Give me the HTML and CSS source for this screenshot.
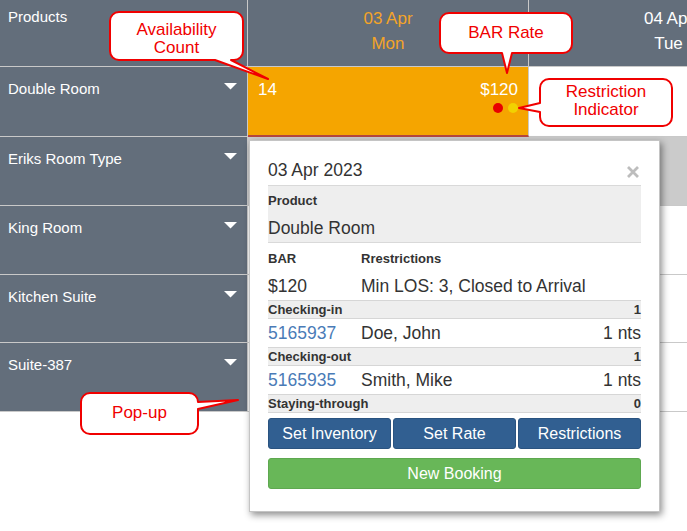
FILE: index.html
```html
<!DOCTYPE html>
<html>
<head>
<meta charset="utf-8">
<link rel="stylesheet" href="styles.css">
</head>
<body>
<div class="board">
  <div class="grid">
    <div class="cell side head">Products</div>
    <div class="cell date head today"><div>03 Apr</div><div>Mon</div></div>
    <div class="cell date head"><div>04 Apr</div><div>Tue</div></div>

    <div class="cell side"><span>Double Room</span><svg class="caret" viewBox="0 0 13 7"><polygon points="0,0 13,0 6.5,6.5"/></svg></div>
    <div class="cell avail">
      <div class="avail-top"><span>14</span><span>$120</span></div>
      <div class="dots"><i class="dot red"></i><i class="dot yellow"></i></div>
    </div>
    <div class="cell day last"></div>

    <div class="cell side"><span>Eriks Room Type</span><svg class="caret" viewBox="0 0 13 7"><polygon points="0,0 13,0 6.5,6.5"/></svg></div>
    <div class="cell day closed"></div>
    <div class="cell day closed last"></div>

    <div class="cell side"><span>King Room</span><svg class="caret" viewBox="0 0 13 7"><polygon points="0,0 13,0 6.5,6.5"/></svg></div>
    <div class="cell day"></div>
    <div class="cell day last"></div>

    <div class="cell side"><span>Kitchen Suite</span><svg class="caret" viewBox="0 0 13 7"><polygon points="0,0 13,0 6.5,6.5"/></svg></div>
    <div class="cell day"></div>
    <div class="cell day last"></div>

    <div class="cell side"><span>Suite-387</span><svg class="caret" viewBox="0 0 13 7"><polygon points="0,0 13,0 6.5,6.5"/></svg></div>
    <div class="cell day"></div>
    <div class="cell day last"></div>
  </div>

  <div class="popup">
    <div class="pop-title"><span>03 Apr 2023</span><svg class="close" viewBox="0 0 12 12"><path d="M1 1 L11 11 M11 1 L1 11"/></svg></div>
    <div class="pop-product">
      <div class="lbl">Product</div>
      <div class="val">Double Room</div>
    </div>
    <div class="pair labels"><span class="c1">BAR</span><span>Rrestrictions</span></div>
    <div class="pair values"><span class="c1">$120</span><span>Min LOS: 3, Closed to Arrival</span></div>
    <div class="bar"><span>Checking-in</span><span>1</span></div>
    <div class="booking"><a class="c1 link">5165937</a><span class="guest">Doe, John</span><span>1 nts</span></div>
    <div class="bar"><span>Checking-out</span><span>1</span></div>
    <div class="booking"><a class="c1 link">5165935</a><span class="guest">Smith, Mike</span><span>1 nts</span></div>
    <div class="bar"><span>Staying-through</span><span>0</span></div>
    <div class="btns">
      <button class="btn blue">Set Inventory</button>
      <button class="btn blue">Set Rate</button>
      <button class="btn blue">Restrictions</button>
    </div>
    <button class="btn green">New Booking</button>
  </div>

  <svg class="callouts" viewBox="0 0 687 531">
    <path d="M119 12 H234 A9 9 0 0 1 243 21 V51 A9 9 0 0 1 234 60 H231 L268 79 L215 60 H119 A9 9 0 0 1 110 51 V21 A9 9 0 0 1 119 12 Z"/>
    <path d="M449 13 H563 A9 9 0 0 1 572 22 V44 A9 9 0 0 1 563 53 H512 L507 73 L502 53 H449 A9 9 0 0 1 440 44 V22 A9 9 0 0 1 449 13 Z"/>
    <path d="M549 79 H663 A9 9 0 0 1 672 88 V117 A9 9 0 0 1 663 126 H549 A9 9 0 0 1 540 117 V112 L519 108 L540 103 V88 A9 9 0 0 1 549 79 Z"/>
    <path d="M90 393 H189 A9 9 0 0 1 198 402 L238 400 L198 409 V425 A9 9 0 0 1 189 434 H90 A9 9 0 0 1 81 425 V402 A9 9 0 0 1 90 393 Z"/>
  </svg>
  <div class="co-text co-avail">Availability<br>Count</div>
  <div class="co-text co-bar">BAR Rate</div>
  <div class="co-text co-restr">Restriction<br>Indicator</div>
  <div class="co-text co-pop">Pop-up</div>
</div>
</body>
</html>
```

FILE: styles.css
```css
html, body {
  margin: 0;
  padding: 0;
  background: #ffffff;
}

body {
  font-family: "Liberation Sans", Arial, sans-serif;
}

.board {
  position: relative;
  width: 687px;
  height: 531px;
  overflow: hidden;
  background: #ffffff;
}

.grid {
  display: grid;
  grid-template-columns: 248px 281px 280px;
  grid-template-rows: 67px 70px 69px 69px 68px 69px;
  width: 809px;
}

.cell {
  box-sizing: border-box;
  border-bottom: 1px solid #c9c9c9;
  border-right: 1px solid #c9c9c9;
}

.cell.last {
  border-right: none;
}

.side {
  background: #636e7b;
  color: #ffffff;
  font-size: 15px;
  line-height: 17px;
  padding: 13px 10px 0 8px;
  display: flex;
  justify-content: space-between;
  align-items: flex-start;
}

.side.head {
  padding-top: 8px;
}

.caret {
  width: 13px;
  height: 7px;
  margin-top: 3px;
  fill: #ffffff;
}

.date {
  background: #636e7b;
  color: #ffffff;
  font-size: 17px;
  line-height: 25px;
  padding-top: 6px;
  text-align: center;
}

.date.today {
  color: #f3a428;
}

.avail {
  background: #f5a500;
  border-bottom: 2px solid #b5473f;
  color: #ffffff;
  font-size: 17px;
  line-height: 20px;
  padding: 13px 10px 0 10px;
}

.avail-top {
  display: flex;
  justify-content: space-between;
}

.dots {
  display: flex;
  justify-content: flex-end;
  gap: 5px;
  margin-top: 3px;
}

.dot {
  display: block;
  width: 10px;
  height: 10px;
  border-radius: 50%;
}

.dot.red {
  background: #e80000;
}

.dot.yellow {
  background: #f2d100;
}

.day {
  background: #ffffff;
}

.day.closed {
  background: #cbcbcb;
}

/* popup */
.popup {
  position: absolute;
  left: 249px;
  top: 140px;
  width: 411px;
  height: 372px;
  box-sizing: border-box;
  background: #ffffff;
  border: 1px solid #c4c4c4;
  box-shadow: 2px 3px 7px rgba(0, 0, 0, 0.45);
  padding: 19px 18px 0 18px;
  color: #333333;
}

.pop-title {
  height: 25px;
  display: flex;
  justify-content: space-between;
  align-items: flex-start;
  font-size: 17.5px;
  line-height: 20px;
}

.close {
  width: 12px;
  height: 12px;
  margin: 6px 2px 0 0;
  stroke: #bdbdbd;
  stroke-width: 2.8;
  fill: none;
}

.pop-product {
  background: #eeeeee;
  border-top: 1px solid #d9d9d9;
  border-bottom: 1px solid #d9d9d9;
}

.lbl {
  height: 28px;
  display: flex;
  align-items: center;
  font-size: 13px;
  font-weight: bold;
}

.val {
  height: 28px;
  display: flex;
  align-items: center;
  font-size: 17.5px;
}

.pair {
  display: flex;
  align-items: center;
}

.pair.labels {
  height: 30px;
  font-size: 13px;
  font-weight: bold;
}

.pair.values {
  height: 27px;
  font-size: 17.5px;
}

.c1 {
  width: 93px;
  flex: none;
}

.bar {
  height: 17px;
  background: #eeeeee;
  border-top: 1px solid #d6d6d6;
  border-bottom: 1px solid #d6d6d6;
  display: flex;
  justify-content: space-between;
  align-items: center;
  font-size: 13px;
  font-weight: bold;
}

.booking {
  height: 28px;
  display: flex;
  align-items: center;
  font-size: 17.5px;
}

.link {
  color: #4a7bb7;
  text-decoration: none;
}

.guest {
  flex: 1;
}

.btns {
  display: flex;
  gap: 2px;
  margin-top: 5px;
}

.btn {
  font-family: "Liberation Sans", Arial, sans-serif;
  font-size: 16px;
  color: #ffffff;
  border: none;
  border-radius: 3px;
  height: 31px;
  padding: 0;
  margin: 0;
}

.btn.blue {
  flex: 1;
  background: #315f91;
  border: 1px solid #2a5380;
}

.btn.green {
  display: block;
  width: 100%;
  margin-top: 9px;
  background: #68b758;
  border: 1px solid #5ea850;
}

/* callouts */
.callouts {
  position: absolute;
  left: 0;
  top: 0;
  width: 687px;
  height: 531px;
  pointer-events: none;
}

.callouts path {
  fill: #ffffff;
  stroke: #f00000;
  stroke-width: 2;
  stroke-linejoin: round;
}

.co-text {
  position: absolute;
  color: #f00000;
  font-size: 17px;
  line-height: 18px;
  text-align: center;
}

.co-avail {
  left: 110px;
  width: 133px;
  top: 21px;
}

.co-bar {
  left: 440px;
  width: 132px;
  top: 24px;
}

.co-restr {
  left: 540px;
  width: 132px;
  top: 83px;
}

.co-pop {
  left: 81px;
  width: 117px;
  top: 404px;
}
```
